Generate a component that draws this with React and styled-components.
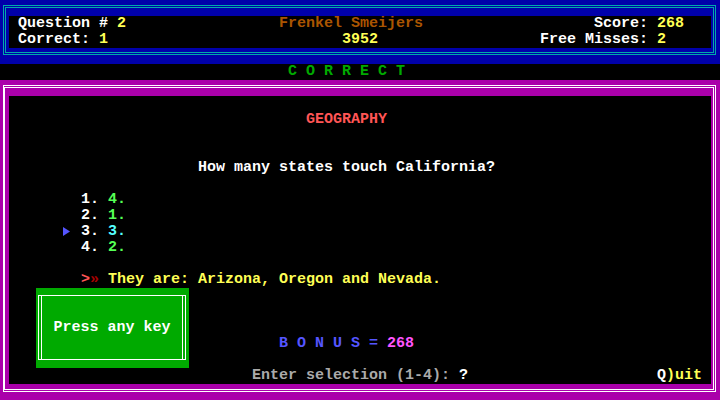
import React from "react";
import styled, { createGlobalStyle } from "styled-components";

const C = {
  black: "#000000",
  blue: "#0000AA",
  green: "#00AA00",
  cyan: "#00AAAA",
  red: "#AA0000",
  magenta: "#AA00AA",
  brown: "#AA5500",
  gray: "#AAAAAA",
  lblue: "#5555FF",
  lgreen: "#55FF55",
  lcyan: "#55FFFF",
  lred: "#FF5555",
  lmagenta: "#FF55FF",
  yellow: "#FFFF55",
  white: "#FFFFFF",
};

const CELL = 9;

const Global = createGlobalStyle`
  html, body { margin: 0; padding: 0; background: #000; }
  * { box-sizing: border-box; }
`;

const Screen = styled.div`
  width: 720px;
  height: 400px;
  overflow: hidden;
  background: ${C.black};
  font-family: "Liberation Mono", "DejaVu Sans Mono", monospace;
  font-size: 15px;
  font-weight: bold;
  line-height: 16px;
  white-space: pre;
  display: flex;
  flex-direction: column;
`;

const Band = styled.section`
  height: ${(p) => p.$h}px;
  background: ${(p) => p.$bg};
  padding: 5px 4px ${(p) => p.$bottom}px 3px;
  display: flex;
`;

const OuterFrame = styled.div`
  flex: 1;
  display: flex;
  border: 1px solid ${(p) => p.$line};
  padding: ${(p) => (p.$tight ? "1px 1px 1px 0" : "1px")};
`;

const InnerFrame = styled.div`
  flex: 1;
  display: flex;
  border: 1px solid ${(p) => p.$line};
  padding: ${(p) => p.$pad};
`;

const HeaderPanel = styled.div`
  flex: 1;
  background: ${C.black};
  padding-left: ${CELL}px;
  display: grid;
  grid-template-columns: 261px 243px 126px auto;
  grid-template-rows: 16px 16px;
  color: ${C.white};
`;

const Label = styled.span`
  color: ${(p) => p.$color || C.white};
  text-align: ${(p) => (p.$right ? "right" : "left")};
  padding-left: ${(p) => (p.$indent || 0) * CELL}px;
`;

const Txt = styled.span`
  color: ${(p) => p.$color};
`;

const StatusStrip = styled.div`
  height: 16px;
  padding-left: ${32 * CELL}px;
  color: ${C.green};
`;

const BoardPanel = styled.div`
  flex: 1;
  position: relative;
  background: ${C.black};
  display: grid;
  grid-template-rows: repeat(18, 16px);
  color: ${C.white};
`;

const Line = styled.div`
  grid-row: ${(p) => p.$row - 5};
  display: flex;
  padding-left: ${(p) => (p.$col - 1) * CELL}px;
  padding-right: ${CELL}px;
`;

const Marker = styled.span`
  width: ${2 * CELL}px;
  height: 16px;
  display: flex;
`;

const Quit = styled.span`
  margin-left: auto;
  color: ${C.yellow};
`;

const Popup = styled.div`
  position: absolute;
  left: 27px;
  top: 192px;
  width: 153px;
  height: 80px;
  background: ${C.green};
  padding: 7px 3px 8px 2px;
  display: flex;
`;

const PopupFrame = styled.div`
  flex: 1;
  display: flex;
  border: 1px solid ${C.white};
  padding: 0 2px;
`;

const PopupInner = styled.div`
  flex: 1;
  display: flex;
  align-items: center;
  justify-content: center;
  border-left: 1px solid ${C.white};
  border-right: 1px solid ${C.white};
  color: ${C.white};
`;

const options = [
  { n: "1", a: "4.", color: C.lgreen },
  { n: "2", a: "1.", color: C.lgreen },
  { n: "3", a: "3.", color: C.lcyan, selected: true },
  { n: "4", a: "2.", color: C.lgreen },
];

function Arrow() {
  return (
    <svg width="9" height="16" viewBox="0 0 9 16">
      <polygon points="0,3 7,7.5 0,12" fill={C.lblue} />
    </svg>
  );
}

export default function App() {
  return (
    <>
      <Global />
      <Screen>
        <Band $h={64} $bg={C.blue} $bottom={9}>
          <OuterFrame $line={C.cyan}>
            <InnerFrame $line={C.cyan} $pad="8px 2px 4px 3px">
              <HeaderPanel>
                <Label>
                  Question # <Txt $color={C.yellow}>2</Txt>
                </Label>
                <Label $color={C.brown}>Frenkel Smeijers</Label>
                <Label $right>Score:</Label>
                <Label $color={C.yellow} $indent={1}>268</Label>
                <Label>
                  Correct: <Txt $color={C.yellow}>1</Txt>
                </Label>
                <Label $color={C.yellow} $indent={7}>3952</Label>
                <Label $right>Free Misses:</Label>
                <Label $color={C.yellow} $indent={1}>2</Label>
              </HeaderPanel>
            </InnerFrame>
          </OuterFrame>
        </Band>

        <StatusStrip>C O R R E C T</StatusStrip>

        <Band $h={320} $bg={C.magenta} $bottom={8}>
          <OuterFrame $line={C.white} $tight>
            <InnerFrame $line={C.white} $pad="8px 2px 5px 4px">
              <BoardPanel>
                <Line $row={7} $col={34}>
                  <Txt $color={C.lred}>GEOGRAPHY</Txt>
                </Line>
                <Line $row={10} $col={22}>How many states touch California?</Line>
                {options.map((o, i) => (
                  <Line key={o.n} $row={12 + i} $col={7}>
                    <Marker>{o.selected ? <Arrow /> : null}</Marker>
                    {o.n + ". "}
                    <Txt $color={o.color}>{o.a}</Txt>
                  </Line>
                ))}
                <Line $row={17} $col={9}>
                  <Txt $color={C.lred}>&gt;</Txt>
                  <Txt $color={C.red}>»</Txt>
                  <Txt $color={C.yellow}> They are: Arizona, Oregon and Nevada.</Txt>
                </Line>
                <Line $row={21} $col={31}>
                  <Txt $color={C.lblue}>B O N U S = </Txt>
                  <Txt $color={C.lmagenta}>268</Txt>
                </Line>
                <Line $row={23} $col={28}>
                  <Txt $color={C.gray}>Enter selection (1-4): </Txt>
                  <Txt $color={C.white}>?</Txt>
                  <Quit>
                    <Txt $color={C.white}>Q</Txt>)uit
                  </Quit>
                </Line>
                <Popup>
                  <PopupFrame>
                    <PopupInner>Press any key</PopupInner>
                  </PopupFrame>
                </Popup>
              </BoardPanel>
            </InnerFrame>
          </OuterFrame>
        </Band>
      </Screen>
    </>
  );
}
